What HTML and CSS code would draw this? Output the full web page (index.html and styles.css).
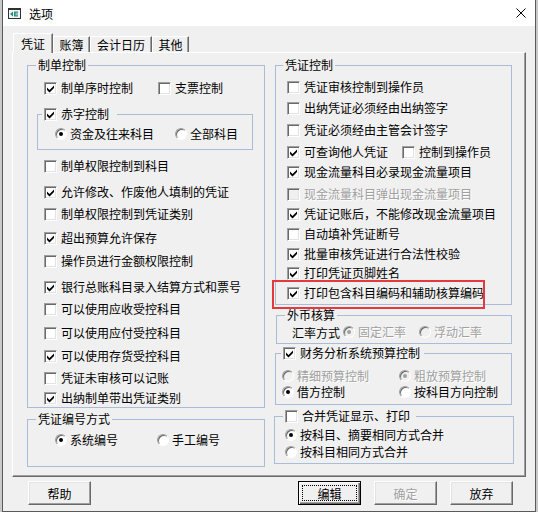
FILE: index.html
```html
<!DOCTYPE html>
<html lang="zh-CN">
<head>
  <meta charset="UTF-8">
  <title>选项</title>
  <link rel="stylesheet" href="styles.css">
</head>
<body>
  <div class="window">
    <div class="titlebar">
      <svg class="app-icon" width="13" height="11" viewBox="0 0 13 11">
        <rect x="0.5" y="0.5" width="12" height="10" fill="#f4f4f4" stroke="#303030"/>
        <rect x="1" y="1" width="11" height="1" fill="#303030"/>
        <path d="M2 6l3-2.5v5z" fill="#1f8f80"/>
        <path d="M6 3.5h4v1.2H7.4v0.7H10v1.2H7.4v0.7H10v1.2H6z" fill="#1f8f80"/>
      </svg>
      <span class="title">选项</span>
      <svg class="close" width="10" height="10" viewBox="0 0 10 10">
        <path d="M0.5 0.5l9 9M9.5 0.5l-9 9" stroke="#000" stroke-width="1"/>
      </svg>
    </div>

    <div class="tabs">
      <div class="tab active t40">凭证</div>
      <div class="tab t37">账簿</div>
      <div class="tab t62">会计日历</div>
      <div class="tab t37">其他</div>
    </div>

    <div class="panel">
      <!-- left column -->
      <div class="col">
        <fieldset class="group g-make">
          <legend>制单控制</legend>
          <div class="rows rows-make">
            <div class="row cols-114">
              <label class="opt"><span class="cb"><svg viewBox="0 0 11 11"><path d="M2 4.5l2.5 2.5 4.5-4.5v2.5l-4.5 4.5-2.5-2.5z"/></svg></span>制单序时控制</label>
              <label class="opt"><span class="cb"></span>支票控制</label>
            </div>
            <fieldset class="group g-red">
              <legend><label class="opt"><span class="cb"><svg viewBox="0 0 11 11"><path d="M2 4.5l2.5 2.5 4.5-4.5v2.5l-4.5 4.5-2.5-2.5z"/></svg></span>赤字控制</label></legend>
              <div class="row cols-120">
                <label class="opt"><span class="rd on"></span>资金及往来科目</label>
                <label class="opt"><span class="rd"></span>全部科目</label>
              </div>
            </fieldset>
            <div class="row"><label class="opt"><span class="cb"></span>制单权限控制到科目</label></div>
            <div class="row"><label class="opt"><span class="cb"><svg viewBox="0 0 11 11"><path d="M2 4.5l2.5 2.5 4.5-4.5v2.5l-4.5 4.5-2.5-2.5z"/></svg></span>允许修改、作废他人填制的凭证</label></div>
            <div class="row"><label class="opt"><span class="cb"></span>制单权限控制到凭证类别</label></div>
            <div class="row"><label class="opt"><span class="cb"><svg viewBox="0 0 11 11"><path d="M2 4.5l2.5 2.5 4.5-4.5v2.5l-4.5 4.5-2.5-2.5z"/></svg></span>超出预算允许保存</label></div>
            <div class="row"><label class="opt"><span class="cb"></span>操作员进行金额权限控制</label></div>
            <div class="row"><label class="opt"><span class="cb"><svg viewBox="0 0 11 11"><path d="M2 4.5l2.5 2.5 4.5-4.5v2.5l-4.5 4.5-2.5-2.5z"/></svg></span>银行总账科目录入结算方式和票号</label></div>
            <div class="row"><label class="opt"><span class="cb"></span>可以使用应收受控科目</label></div>
            <div class="row"><label class="opt"><span class="cb"></span>可以使用应付受控科目</label></div>
            <div class="row"><label class="opt"><span class="cb"><svg viewBox="0 0 11 11"><path d="M2 4.5l2.5 2.5 4.5-4.5v2.5l-4.5 4.5-2.5-2.5z"/></svg></span>可以使用存货受控科目</label></div>
            <div class="row"><label class="opt"><span class="cb"></span>凭证未审核可以记账</label></div>
            <div class="row"><label class="opt"><span class="cb"><svg viewBox="0 0 11 11"><path d="M2 4.5l2.5 2.5 4.5-4.5v2.5l-4.5 4.5-2.5-2.5z"/></svg></span>出纳制单带出凭证类别</label></div>
          </div>
        </fieldset>

        <fieldset class="group g-number">
          <legend>凭证编号方式</legend>
          <div class="row cols-102">
            <label class="opt"><span class="rd on"></span>系统编号</label>
            <label class="opt"><span class="rd"></span>手工编号</label>
          </div>
        </fieldset>
      </div>

      <!-- right column -->
      <div class="col">
        <fieldset class="group g-voucher">
          <legend>凭证控制</legend>
          <div class="rows rows-voucher">
            <div class="row"><label class="opt"><span class="cb"></span>凭证审核控制到操作员</label></div>
            <div class="row"><label class="opt"><span class="cb"></span>出纳凭证必须经由出纳签字</label></div>
            <div class="row"><label class="opt"><span class="cb"></span>凭证必须经由主管会计签字</label></div>
            <div class="row cols-115">
              <label class="opt"><span class="cb"><svg viewBox="0 0 11 11"><path d="M2 4.5l2.5 2.5 4.5-4.5v2.5l-4.5 4.5-2.5-2.5z"/></svg></span>可查询他人凭证</label>
              <label class="opt"><span class="cb"></span>控制到操作员</label>
            </div>
            <div class="row"><label class="opt"><span class="cb"><svg viewBox="0 0 11 11"><path d="M2 4.5l2.5 2.5 4.5-4.5v2.5l-4.5 4.5-2.5-2.5z"/></svg></span>现金流量科目必录现金流量项目</label></div>
            <div class="row"><label class="opt dis"><span class="cb"></span>现金流量科目弹出现金流量项目</label></div>
            <div class="row"><label class="opt"><span class="cb"><svg viewBox="0 0 11 11"><path d="M2 4.5l2.5 2.5 4.5-4.5v2.5l-4.5 4.5-2.5-2.5z"/></svg></span>凭证记账后，不能修改现金流量项目</label></div>
            <div class="row"><label class="opt"><span class="cb"></span>自动填补凭证断号</label></div>
            <div class="row"><label class="opt"><span class="cb"><svg viewBox="0 0 11 11"><path d="M2 4.5l2.5 2.5 4.5-4.5v2.5l-4.5 4.5-2.5-2.5z"/></svg></span>批量审核凭证进行合法性校验</label></div>
            <div class="row"><label class="opt"><span class="cb"><svg viewBox="0 0 11 11"><path d="M2 4.5l2.5 2.5 4.5-4.5v2.5l-4.5 4.5-2.5-2.5z"/></svg></span>打印凭证页脚姓名</label></div>
            <div class="row"><label class="opt"><span class="cb"><svg viewBox="0 0 11 11"><path d="M2 4.5l2.5 2.5 4.5-4.5v2.5l-4.5 4.5-2.5-2.5z"/></svg></span>打印包含科目编码和辅助核算编码</label></div>
          </div>
        </fieldset>

        <fieldset class="group g-fx">
          <legend>外币核算</legend>
          <div class="row cols-fx">
            <span class="field-label">汇率方式</span>
            <label class="opt dis"><span class="rd on"></span>固定汇率</label>
            <label class="opt dis"><span class="rd"></span>浮动汇率</label>
          </div>
        </fieldset>

        <fieldset class="group g-budget">
          <legend><label class="opt"><span class="cb"><svg viewBox="0 0 11 11"><path d="M2 4.5l2.5 2.5 4.5-4.5v2.5l-4.5 4.5-2.5-2.5z"/></svg></span>财务分析系统预算控制</label></legend>
          <div class="row cols-117">
            <label class="opt dis"><span class="rd"></span>精细预算控制</label>
            <label class="opt dis"><span class="rd on"></span>粗放预算控制</label>
          </div>
          <div class="row cols-117">
            <label class="opt"><span class="rd on"></span>借方控制</label>
            <label class="opt"><span class="rd"></span>按科目方向控制</label>
          </div>
        </fieldset>

        <fieldset class="group g-merge">
          <legend><label class="opt"><span class="cb"></span>合并凭证显示、打印</label></legend>
          <div class="row r17"><label class="opt"><span class="rd on"></span>按科目、摘要相同方式合并</label></div>
          <div class="row"><label class="opt"><span class="rd"></span>按科目相同方式合并</label></div>
        </fieldset>
      </div>

      <div class="highlight"></div>
    </div>

    <div class="buttons">
      <button class="btn">帮助</button>
      <button class="btn default">编辑<span class="focus"></span></button>
      <button class="btn" disabled>确定</button>
      <button class="btn">放弃</button>
    </div>
  </div>
</body>
</html>
```

FILE: styles.css
```css
body {
  margin: 0;
  background: #c9c9c9;
  font-family: "Noto Sans CJK SC", "Noto Sans", sans-serif;
  font-size: 12px;
  color: #000;
}
.window {
  margin-left: 2px;
  width: 532px;
  height: 511px;
  border: 1px solid #5a5a5a;
  border-top: none;
  background: #f0f0f0;
}

/* title bar */
.titlebar {
  height: 26px;
  background: #fff;
  display: flex;
  align-items: center;
  padding-left: 5px;
}
.app-icon {
  margin-right: 8px;
  margin-top: 1px;
}
.close {
  margin-left: auto;
  margin-right: 9px;
}

/* tabs */
.tabs {
  display: flex;
  align-items: flex-end;
  height: 19px;
  margin-top: 7px;
  padding-left: 10px;
}
.tab {
  box-sizing: border-box;
  height: 16px;
  line-height: 14px;
  padding-top: 1px;
  text-align: center;
  border-top: 1px solid #fff;
  border-left: 1px solid #fff;
  border-right: 1px solid #696969;
  box-shadow: inset -1px 0 #a0a0a0;
}
.tab.active {
  height: 20px;
  margin-bottom: -1px;
  padding-top: 3px;
  position: relative;
  z-index: 1;
  background: #f0f0f0;
}
.t37 { width: 37px; }
.t40 { width: 40px; }
.t62 { width: 62px; }

/* tab page */
.panel {
  position: relative;
  box-sizing: border-box;
  margin-left: 9px;
  width: 514px;
  height: 425px;
  border-top: 1px solid #fff;
  border-left: 1px solid #fff;
  border-right: 1px solid #696969;
  border-bottom: 1px solid #696969;
  box-shadow: inset -1px -1px #a0a0a0;
  padding: 4px 0 0 14px;
  display: grid;
  grid-template-columns: 238px 237px;
  column-gap: 10px;
  align-items: start;
}

/* group boxes */
.group {
  margin: 0;
  padding: 0;
  min-width: 0;
  border: 1px solid #a9bdd8;
}
.group legend {
  padding: 0 2px;
  line-height: 16px;
  height: 16px;
}
.rows {
  display: grid;
  align-items: start;
}
.row {
  display: flex;
  align-items: center;
  height: 16px;
}

.g-make { padding: 7px 0 1px; }
.g-make legend { margin-left: 8px; }
.g-make .row { padding-left: 16px; }
.rows-make {
  grid-template-rows: 26px 52px 26px 22px 24px 23px 26px 22px 24px 23px 22px 20px 16px;
}
.g-red {
  margin: 0 11px 0 9px;
  padding: 4px 0 7px;
}
.g-red legend { margin-left: 4px; padding: 0 8px 0 2px; }
.g-make .g-red .row { padding-left: 17px; }

.g-number {
  margin-top: 3px;
  padding: 5px 0 18px;
}
.g-number legend { margin-left: 8px; }
.g-number .row { padding-left: 27px; }

.g-voucher { padding: 6px 0 3px; }
.g-voucher legend { margin-left: 7px; }
.g-voucher .row { padding-left: 11px; }
.rows-voucher {
  grid-template-rows: 21px 22px 22px 20px 22px 20px 20px 20px 19px 20px 16px;
}

.g-fx {
  margin-top: 2px;
  margin-left: 1px;
  padding: 1px 0 3px;
}
.g-fx legend { margin-left: 8px; }
.g-fx .row { padding-left: 15px; }
.field-label { width: 51px; }

.g-budget {
  margin-top: 1px;
  padding: 7px 0 4px;
}
.g-budget legend { margin-left: 5px; padding: 0 4px 0 2px; }
.g-budget .row { padding-left: 6px; }

.g-merge {
  margin: 3px -2px 0 -1px;
  padding: 3px 0 3px;
}
.g-merge legend { margin-left: 8px; padding: 0 6px 0 2px; }
.g-merge .row { padding-left: 10px; }
.r17 { margin-bottom: 1px; }

.cols-102 > .opt:first-child { width: 102px; }
.cols-114 > .opt:first-child { width: 114px; }
.cols-115 > .opt:first-child { width: 115px; }
.cols-117 > .opt:first-child { width: 117px; }
.cols-120 > .opt:first-child { width: 120px; }
.cols-fx > .opt:nth-child(2) { width: 76px; }

/* check boxes and radios */
.opt {
  display: inline-flex;
  align-items: center;
  height: 16px;
  line-height: 16px;
  white-space: nowrap;
}
.opt.dis {
  color: #a0a0a0;
  text-shadow: 1px 1px #fff;
}
.cb {
  box-sizing: border-box;
  width: 13px;
  height: 13px;
  margin-right: 4px;
  flex: none;
  background: #fff;
  border: 1px solid;
  border-color: #a0a0a0 #fff #fff #a0a0a0;
  box-shadow: inset 1px 1px #696969, inset -1px -1px #e3e3e3;
}
.cb svg {
  display: block;
  width: 11px;
  height: 11px;
  fill: #000;
}
.dis .cb { background: #f0f0f0; }
.rd {
  position: relative;
  box-sizing: border-box;
  width: 12px;
  height: 12px;
  margin-right: 3px;
  flex: none;
  border-radius: 50%;
  background: #fff;
  border: 1px solid;
  border-color: #a0a0a0 #fff #fff #a0a0a0;
  box-shadow: inset 1px 1px #696969;
}
.dis .rd { background: #f0f0f0; }
.rd.on::after {
  content: "";
  position: absolute;
  left: 3px;
  top: 3px;
  width: 4px;
  height: 4px;
  border-radius: 50%;
  background: #000;
}
.dis .rd.on::after { background: #a0a0a0; }

/* annotation */
.highlight {
  position: absolute;
  left: 259px;
  top: 227px;
  width: 213px;
  height: 29px;
  box-sizing: border-box;
  border: 2px solid #e5393c;
}

/* buttons */
.buttons {
  display: flex;
  gap: 13px;
  width: 485px;
  margin: 4px 0 0 25px;
}
.btn {
  position: relative;
  box-sizing: border-box;
  width: 63px;
  height: 24px;
  padding: 0;
  font: inherit;
  color: #000;
  background: #f0f0f0;
  border: 1px solid;
  border-color: #fff #696969 #696969 #fff;
  box-shadow: inset -1px -1px #a0a0a0, inset 1px 1px #e3e3e3;
}
.btn.default {
  margin-left: auto;
  border-color: #000;
  box-shadow: inset 1px 1px #fff, inset -1px -1px #696969, inset -2px -2px #a0a0a0;
}
.btn .focus {
  position: absolute;
  inset: 3px;
  border: 1px dotted #000;
}
.btn:disabled {
  color: #a0a0a0;
  text-shadow: 1px 1px #fff;
}
```
